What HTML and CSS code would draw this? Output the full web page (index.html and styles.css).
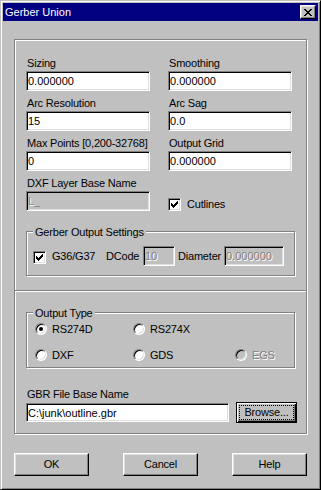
FILE: index.html
```html
<!DOCTYPE html>
<html lang="en">
    <head>
        <meta charset="UTF-8" />
        <meta name="viewport" content="width=device-width, initial-scale=1.0" />
        <title>Gerber Union</title>
        <link rel="stylesheet" href="styles.css">
    </head>
    <body>
        <div class="window">
            <div class="titlebar">
                <span class="title">Gerber Union</span>
                <button class="btn close">
                    <svg width="8" height="7" viewBox="0 0 8 7"><path d="M0 0h2v1H0zM6 0h2v1H6zM1 1h2v1H1zM5 1h2v1H5zM2 2h4v1H2zM3 3h2v1H3zM2 4h4v1H2zM1 5h2v1H1zM5 5h2v1H5zM0 6h2v1H0zM6 6h2v1H6z" /></svg>
                </button>
            </div>

            <div class="frame">
                <div class="section upper">
                    <div class="fields">
                        <label class="field"><span>Sizing</span><input class="edit" type="text" value="0.000000" /></label>
                        <label class="field"><span>Smoothing</span><input class="edit" type="text" value="0.000000" /></label>
                        <label class="field"><span>Arc Resolution</span><input class="edit" type="text" value="15" /></label>
                        <label class="field"><span>Arc Sag</span><input class="edit" type="text" value="0.0" /></label>
                        <label class="field"><span>Max Points [0,200-32768]</span><input class="edit" type="text" value="0" /></label>
                        <label class="field"><span>Output Grid</span><input class="edit" type="text" value="0.000000" /></label>
                        <label class="field"><span class="off">DXF Layer Base Name</span><input class="edit" type="text" value="L_" disabled /></label>
                        <label class="field cut">
                            <span class="check"><svg width="7" height="7" viewBox="0 0 7 7"><path d="M6 0h1v1H6zM5 1h2v1H5zM0 2h1v1H0zM4 2h3v1H4zM0 3h2v1H0zM3 3h3v1H3zM0 4h5v1H0zM1 5h3v1H1zM2 6h1v1H2z" /></svg></span>
                            <span>Cutlines</span>
                        </label>
                    </div>

                    <div class="group gerber">
                        <span class="legend">Gerber Output Settings</span>
                        <div class="gerber-row">
                            <span class="check"><svg width="7" height="7" viewBox="0 0 7 7"><path d="M6 0h1v1H6zM5 1h2v1H5zM0 2h1v1H0zM4 2h3v1H4zM0 3h2v1H0zM3 3h3v1H3zM0 4h5v1H0zM1 5h3v1H1zM2 6h1v1H2z" /></svg></span>
                            <span class="g36">G36/G37</span>
                            <span class="dcode">DCode</span>
                            <input class="edit small" type="text" value="10" disabled />
                            <span class="diam">Diameter</span>
                            <input class="edit medium" type="text" value="0.000000" disabled />
                        </div>
                    </div>
                </div>

                <div class="divider"></div>

                <div class="section lower">
                    <div class="group output">
                        <span class="legend">Output Type</span>
                        <div class="radios">
                            <label class="option"><span class="radio on"></span>RS274D</label>
                            <label class="option"><span class="radio"></span>RS274X</label>
                            <span></span>
                            <label class="option"><span class="radio"></span>DXF</label>
                            <label class="option"><span class="radio"></span>GDS</label>
                            <label class="option off"><span class="radio dim"></span>EGS</label>
                        </div>
                    </div>

                    <div class="field gbr">
                        <span>GBR File Base Name</span>
                        <div class="file-row">
                            <input class="edit wide" type="text" value="C:\junk\outline.gbr" />
                            <button class="btn browse"><span>Browse...</span></button>
                        </div>
                    </div>
                </div>
            </div>

            <div class="buttons">
                <button class="btn push">OK</button>
                <button class="btn push">Cancel</button>
                <button class="btn push">Help</button>
            </div>
        </div>
    </body>
</html>
```

FILE: styles.css
```css
* {
    box-sizing: border-box;
    margin: 0;
    padding: 0;
}

body {
    width: 321px;
    height: 490px;
    background-color: #c0c0c0;
    color: #000;
    font: 11px/13px "Liberation Sans", Arial, sans-serif;
    letter-spacing: -0.2px;
}

.window {
    width: 321px;
    height: 490px;
    padding: 2px;
    background-color: #c0c0c0;
    border: 1px solid;
    border-color: #c0c0c0 #000 #000 #c0c0c0;
    box-shadow: inset 1px 1px #fff, inset -1px -1px #808080;
}

.titlebar {
    height: 18px;
    padding: 0 2px;
    display: flex;
    align-items: center;
    justify-content: space-between;
    background-color: #000080;
    color: #fff;
}

.title {
    padding-top: 1px;
    letter-spacing: 0;
}

.btn {
    background-color: #c0c0c0;
    color: #000;
    font: inherit;
    letter-spacing: inherit;
    border: 1px solid;
    border-color: #fff #000 #000 #fff;
    box-shadow: inset -1px -1px #808080, inset 1px 1px #dfdfdf;
}

.close {
    width: 16px;
    height: 14px;
    display: flex;
    align-items: center;
    justify-content: center;
    padding-right: 1px;
}

svg {
    display: block;
    shape-rendering: crispEdges;
}

.frame {
    width: 293px;
    height: 395px;
    margin: 18px 0 0 11px;
    border: 1px solid #808080;
    box-shadow: inset 1px 1px #fff, 1px 1px #fff;
}

.section.upper {
    height: 250px;
    padding: 17px 0 0 11px;
}

.section.lower {
    height: 141px;
    padding: 20px 0 0 11px;
}

.divider {
    border-top: 1px solid #808080;
    border-bottom: 1px solid #fff;
}

.fields {
    display: grid;
    grid-template-columns: 124px 124px;
    column-gap: 18px;
    row-gap: 6px;
}

.field {
    display: flex;
    flex-direction: column;
}

.field > span {
    padding-left: 1px;
    margin-bottom: 1px;
}

.field.cut {
    flex-direction: row;
    align-items: center;
    padding-top: 21px;
}

.field.cut > span {
    padding-left: 0;
    margin-bottom: 0;
}

.edit {
    width: 124px;
    height: 20px;
    padding: 0 1px;
    background-color: #fff;
    color: #000;
    font: inherit;
    letter-spacing: 0;
    outline: none;
    border: 1px solid;
    border-color: #808080 #fff #fff #808080;
    box-shadow: inset 1px 1px #000, inset -1px -1px #dfdfdf;
}

.edit:disabled {
    background-color: #c0c0c0;
    color: #808080;
    text-shadow: 1px 1px #fff;
}

.check {
    width: 13px;
    height: 13px;
    flex: none;
    margin-right: 6px;
    display: flex;
    align-items: center;
    justify-content: center;
    background-color: #fff;
    border: 1px solid;
    border-color: #808080 #fff #fff #808080;
    box-shadow: inset 1px 1px #000, inset -1px -1px #dfdfdf;
}

.group {
    position: relative;
    width: 269px;
    border: 1px solid #808080;
    box-shadow: inset 1px 1px #fff, 1px 1px #fff;
}

.legend {
    position: absolute;
    left: 6px;
    top: -6px;
    padding: 0 2px;
    background-color: #c0c0c0;
}

.gerber {
    height: 45px;
    margin-top: 20px;
    padding: 14px 0 0 6px;
}

.gerber-row {
    height: 20px;
    display: flex;
    align-items: center;
}

.gerber-row .check {
    margin-top: 2px;
}

.g36 {
    width: 54px;
}

.dcode {
    width: 37px;
}

.diam {
    width: 46px;
    margin-left: 3px;
}

.edit.small {
    width: 32px;
}

.edit.medium {
    width: 60px;
}

.output {
    height: 56px;
    padding: 9px 0 0 8px;
}

.radios {
    display: grid;
    grid-template-columns: 98px 102px 60px;
    grid-auto-rows: 14px;
    row-gap: 12px;
}

.option {
    display: flex;
    align-items: center;
}

.radio {
    width: 12px;
    height: 12px;
    flex: none;
    margin-right: 5px;
    display: flex;
    align-items: center;
    justify-content: center;
    border-radius: 50%;
    background-color: #fff;
    border: 1px solid;
    border-color: #808080 #fff #fff #808080;
    box-shadow: inset 1px 1px #000, inset -1px -1px #dfdfdf;
}

.radio.on::after {
    content: "";
    width: 4px;
    height: 4px;
    border-radius: 50%;
    background-color: #000;
}

.radio.dim {
    background-color: #c0c0c0;
}

.off {
    color: #000;
}

.option.off {
    color: #808080;
    text-shadow: 1px 1px #fff;
}

.gbr {
    margin-top: 20px;
}

.file-row {
    display: flex;
    align-items: center;
}

.edit.wide {
    width: 203px;
    height: 19px;
    margin-right: 7px;
}

.browse {
    width: 61px;
    height: 21px;
    padding: 2px;
    border-color: #000;
    box-shadow: inset 1px 1px #fff, inset -1px -1px #000, inset -2px -2px #808080;
}

.browse span {
    display: block;
    height: 15px;
    line-height: 13px;
    border: 1px dotted #000;
}

.buttons {
    width: 293px;
    margin: 19px 0 0 11px;
    display: flex;
    justify-content: space-between;
}

.push {
    width: 75px;
    height: 23px;
}
```
